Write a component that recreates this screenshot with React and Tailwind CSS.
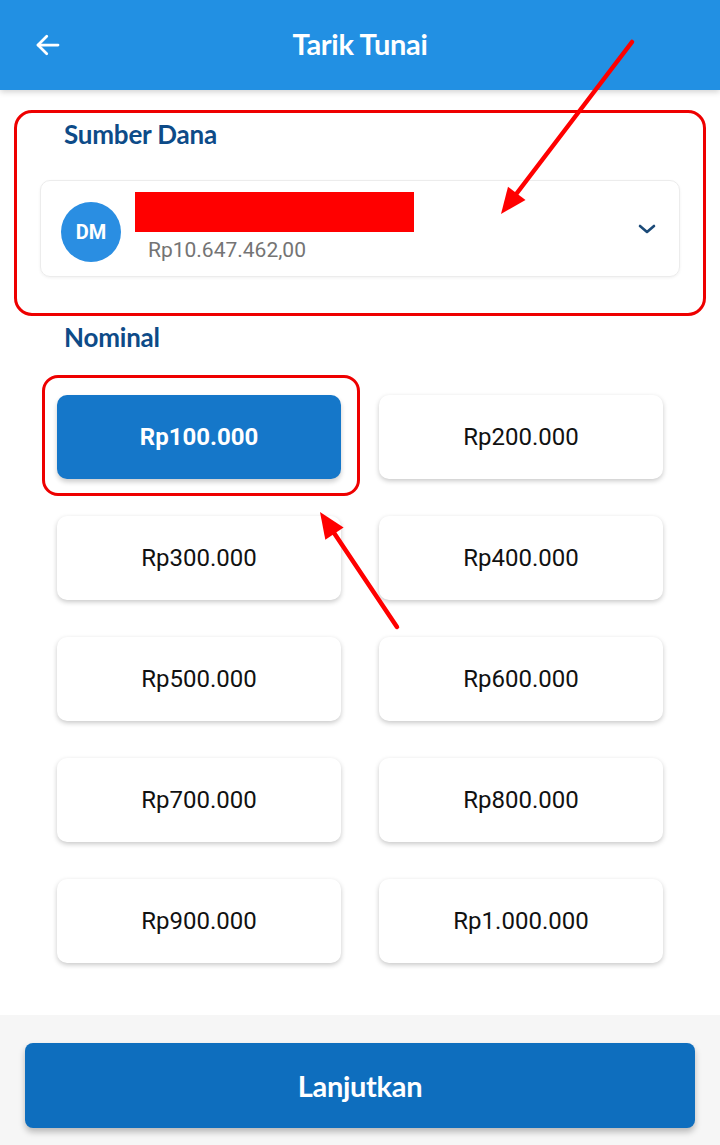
import React from "react";

const amounts = [
  "Rp100.000",
  "Rp200.000",
  "Rp300.000",
  "Rp400.000",
  "Rp500.000",
  "Rp600.000",
  "Rp700.000",
  "Rp800.000",
  "Rp900.000",
  "Rp1.000.000",
];

function Arrow({ x1, y1, x2, y2 }) {
  const dx = x2 - x1;
  const dy = y2 - y1;
  const len = Math.sqrt(dx * dx + dy * dy);
  const ux = dx / len;
  const uy = dy / len;
  const hl = 26;
  const hw = 11;
  const bx = x2 - ux * hl;
  const by = y2 - uy * hl;
  const px = -uy;
  const py = ux;
  const pts = `${x2},${y2} ${bx + px * hw},${by + py * hw} ${bx - px * hw},${by - py * hw}`;
  return (
    <g>
      <line x1={x1} y1={y1} x2={bx + ux * 4} y2={by + uy * 4} stroke="#f00" strokeWidth="4.5" strokeLinecap="round" />
      <polygon points={pts} fill="#f00" />
    </g>
  );
}

export default function App() {
  return (
    <div
      className="relative w-[720px] h-[1145px] bg-white flex flex-col overflow-hidden"
      style={{ fontFamily: "Roboto, 'Noto Sans', sans-serif" }}
    >
      {/* Header */}
      <div className="relative z-10 h-[90px] bg-[#2290e3] flex items-center shadow-[0_2px_6px_rgba(0,0,0,0.18)] shrink-0">
        <div className="w-[96px] pl-[33px] flex items-center">
          <svg width="30" height="30" viewBox="0 0 24 24" fill="none" stroke="#fff" strokeWidth="2.2" strokeLinecap="round" strokeLinejoin="round">
            <path d="M20 12H4" />
            <path d="M11 5l-7 7 7 7" />
          </svg>
        </div>
        <div className="flex-1 text-center text-white text-[29px] leading-[36px] font-bold font-['Lato'] pr-[96px] tracking-[-0.3px] -mt-[2px]">
          Tarik Tunai
        </div>
      </div>

      {/* Content */}
      <div className="flex-1 flex flex-col">
        {/* Sumber Dana annotated box */}
        <div className="mt-[20px] mx-[14px] h-[206px] border-[3px] border-[#ee0000] rounded-[18px] px-[23px] pt-[6px]">
          <div className="pl-[24px] text-[26px] leading-[30px] font-bold text-[#0d4b88] font-['Lato'] tracking-[-0.2px]">
            Sumber Dana
          </div>
          <div className="mt-[31px] h-[97px] border border-[#ececec] rounded-[10px] shadow-[0_1px_3px_rgba(0,0,0,0.06)] flex items-center pl-[20px] pr-[20px]">
            <div className="w-[60px] h-[60px] rounded-full bg-[#2a8ee2] flex items-center justify-center text-white font-bold text-[20px] mt-[7px] shrink-0">
              DM
            </div>
            <div className="ml-[14px] flex flex-col flex-1 -mt-[4px]">
              <div className="w-[279px] h-[40px] bg-[#ff0000]" />
              <div className="ml-[13px] mt-[6px] text-[21px] leading-[24px] text-[#747474]">Rp10.647.462,00</div>
            </div>
            <svg width="24" height="24" viewBox="0 0 24 24" fill="none" stroke="#1b4a78" strokeWidth="2.6" strokeLinecap="round" strokeLinejoin="round">
              <path d="M5 9l7 6 7-6" />
            </svg>
          </div>
        </div>

        {/* Nominal */}
        <div className="mt-[6px] pl-[64px] text-[26px] leading-[30px] font-bold text-[#0d4b88] font-['Lato'] tracking-[-0.2px]">
          Nominal
        </div>

        <div className="mt-[43px] px-[57px] grid grid-cols-2 gap-x-[38px] gap-y-[37px]">
          {amounts.map((a, i) => (
            <div key={a} className="relative">
              {i === 0 && (
                <div className="absolute -left-[15px] -top-[20px] w-[318px] h-[121px] border-[3px] border-[#ee0000] rounded-[16px]" />
              )}
              <div
                className={
                  i === 0
                    ? "relative h-[84px] rounded-[10px] bg-[#1577c9] flex items-center justify-center text-white font-bold text-[24px] shadow-[0_3px_5px_rgba(0,0,0,0.2)]"
                    : "relative h-[84px] rounded-[10px] bg-white flex items-center justify-center text-[#111] text-[24px] shadow-[0_2px_5px_rgba(0,0,0,0.22)]"
                }
              >
                {a}
              </div>
            </div>
          ))}
        </div>
      </div>

      {/* Footer */}
      <div className="h-[130px] bg-[#f6f6f6] px-[25px] pt-[28px] shrink-0">
        <div className="h-[85px] rounded-[8px] bg-[#0e6ebe] flex items-center justify-center text-white text-[29px] font-bold font-['Lato'] tracking-[-0.3px] shadow-[0_4px_6px_rgba(0,0,0,0.25)]">
          Lanjutkan
        </div>
      </div>

      {/* Annotation arrows */}
      <svg className="absolute inset-0 z-20 pointer-events-none" width="720" height="1145">
        <Arrow x1={632} y1={42} x2={501} y2={214} />
        <Arrow x1={397} y1={627} x2={320} y2={512} />
      </svg>
    </div>
  );
}
